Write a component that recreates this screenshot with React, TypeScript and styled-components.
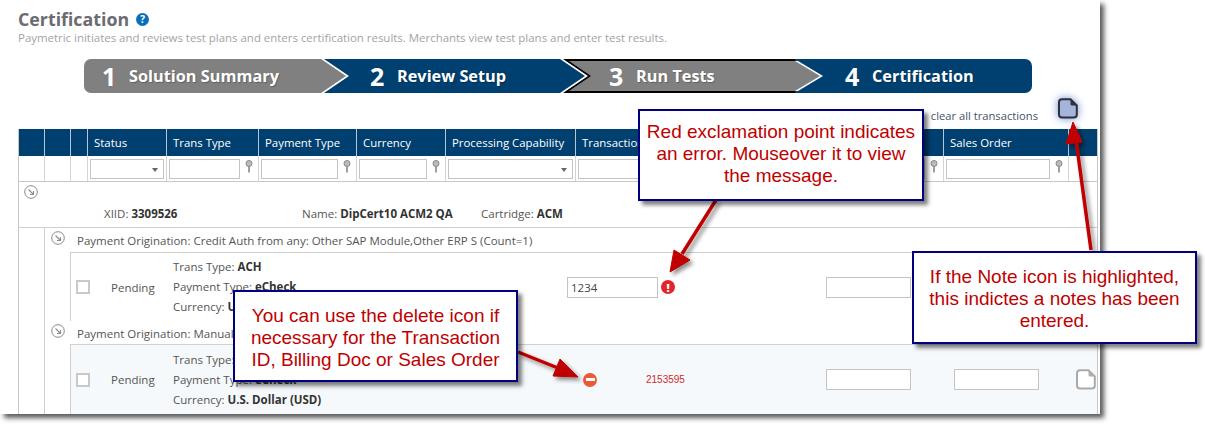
import React from "react";
import styled, { createGlobalStyle } from "styled-components";

const Global = createGlobalStyle`
  html, body { margin: 0; padding: 0; background: #fff; }
  body { font-family: "Open Sans", "Liberation Sans", sans-serif; }
  * { box-sizing: border-box; }
`;

const Page = styled.div`
  position: relative;
  width: 1205px;
  height: 429px;
  overflow: hidden;
  background: #fff;
`;

const Panel = styled.div`
  width: 1100px;
  height: 414px;
  padding: 9px 2px 0 18px;
  background: #fff;
  box-shadow: 4px 4px 5px rgba(0, 0, 0, 0.65);
  overflow: hidden;
`;

const TitleRow = styled.div`
  display: flex;
  align-items: center;
  gap: 7px;
  height: 20px;
`;

const Title = styled.h1`
  margin: 0;
  font-size: 17.8px;
  line-height: 20px;
  font-weight: 700;
  color: #6b6b70;
`;

const Help = styled.span`
  display: flex;
  align-items: center;
  justify-content: center;
  width: 13px;
  height: 13px;
  border-radius: 50%;
  background: #0b6fb8;
  color: #fff;
  font-size: 10px;
  font-weight: 700;
`;

const Subtitle = styled.p`
  margin: 0;
  height: 30px;
  font-size: 11.45px;
  line-height: 17px;
  color: #a3a3a6;
  white-space: nowrap;
`;

const Wizard = styled.div`
  display: flex;
  margin-left: 66px;
  width: 948px;
  height: 34px;
`;

const Step = styled.div<{ $color: string; $pad: number; $w: number; $z: number; $black?: boolean; $first?: boolean; $last?: boolean }>`
  position: relative;
  z-index: ${(p) => p.$z};
  display: flex;
  align-items: center;
  flex: 0 0 ${(p) => p.$w}px;
  padding-left: ${(p) => p.$pad}px;
  background: ${(p) => p.$color};
  color: #fff;
  border-top: ${(p) => (p.$black ? "2px solid #000" : "none")};
  border-bottom: ${(p) => (p.$black ? "2px solid #000" : "none")};
  border-radius: ${(p) => (p.$first ? "7px 0 0 7px" : p.$last ? "0 7px 7px 0" : "0")};
`;

const Tip = styled.span<{ $color: string; $shift: number }>`
  position: absolute;
  left: 100%;
  top: 0;
  bottom: 0;
  width: ${(p) => 25 + p.$shift}px;
  background: ${(p) => p.$color};
  clip-path: polygon(0 0, ${(p) => p.$shift}px 0, 100% 50%, ${(p) => p.$shift}px 100%, 0 100%);
`;

const StepNum = styled.span`
  width: 27px;
  font-size: 25px;
  font-weight: 700;
  font-family: "Open Sans", sans-serif;
  line-height: 30px;
`;

const StepLabel = styled.span`
  font-size: 16.3px;
  font-weight: 700;
  white-space: nowrap;
  text-shadow: 1px 1px 1px rgba(0, 0, 0, 0.25);
`;

const Toolbar = styled.div`
  display: flex;
  justify-content: flex-end;
  align-items: flex-end;
  height: 36px;
  padding-right: 20px;
  gap: 20px;
`;

const ClearLink = styled.span`
  font-size: 11.2px;
  line-height: 14px;
  padding-bottom: 6px;
  color: #44546a;
`;

const NoteIcon = styled.svg<{ $lit?: boolean }>`
  display: block;
  width: 20px;
  height: 21px;
  margin-bottom: ${(p) => (p.$lit ? 10 : 0)}px;
  filter: ${(p) => (p.$lit ? "drop-shadow(0 0 4px rgba(90,125,205,.9))" : "none")};
`;

const Table = styled.div`
  width: 1080px;
  height: 285px;
  border-left: 1px solid #c8c8c8;
  border-right: 1px solid #c8c8c8;
`;

const GridRow = styled.div`
  display: grid;
  grid-template-columns: 26px 26px 17px 79px 92px 98px 89px 130px 240px 128px 125px 1fr;
`;

const HeadRow = styled(GridRow)`
  height: 27px;
  background: #004070;
`;

const HeadCell = styled.div`
  display: flex;
  align-items: center;
  padding-left: 6px;
  border-right: 1px solid #b9c6d2;
  color: #fff;
  font-size: 11.4px;
  white-space: nowrap;
  overflow: hidden;
  &:last-child { border-right: none; }
`;

const FilterRow = styled(GridRow)`
  height: 26px;
  border-bottom: 1px solid #c8c8c8;
`;

const FilterCell = styled.div`
  display: flex;
  align-items: center;
  gap: 5px;
  padding: 0 2px;
  border-right: 1px solid #d4d4d4;
  &:last-child { border-right: none; }
`;

const FilterInput = styled.div`
  position: relative;
  flex: 1;
  min-width: 0;
  height: 20px;
  border: 1px solid #c4c4c4;
  background: #fff;
`;

const Caret = styled.span`
  position: absolute;
  right: 5px;
  top: 8px;
  border-left: 3px solid transparent;
  border-right: 3px solid transparent;
  border-top: 4px solid #666;
`;

const PinIcon = styled.svg`
  flex: none;
  width: 8px;
  height: 13px;
  margin-right: 3px;
  margin-top: -4px;
`;

const ExpandIcon = styled.svg`
  display: block;
  flex: none;
  width: 14px;
  height: 14px;
`;

const Group = styled.div`
  height: 46px;
  padding: 3px 0 0 5px;
  border-bottom: 1px solid #d0d0d0;
`;

const GroupInfo = styled.div`
  display: grid;
  grid-template-columns: 198px 179px auto;
  margin: 7px 0 0 80px;
  font-size: 11.5px;
  line-height: 16px;
  color: #555;
`;

const Strong = styled.b`
  color: #333;
  font-weight: 700;
`;

const Sub = styled.div`
  margin-left: 25px;
  border-left: 1px solid #d0d0d0;
`;

const SubLabel = styled.div<{ $h: number }>`
  display: flex;
  align-items: flex-start;
  gap: 12px;
  height: ${(p) => p.$h}px;
  padding: 3px 0 0 6px;
  font-size: 11.5px;
  line-height: 19px;
  color: #555;
  background: #fff;
  white-space: nowrap;
`;

const Row = styled.div<{ $alt?: boolean }>`
  display: grid;
  grid-template-columns: 40px 62px 394px 259px 128px 122px 1fr;
  align-items: center;
  margin-left: 25px;
  height: ${(p) => (p.$alt ? 70 : 69)}px;
  border-top: 1px solid #d0d0d0;
  border-left: 1px solid #d0d0d0;
  background: ${(p) => (p.$alt ? "#f6f9fb" : "#fff")};
`;

const Check = styled.span`
  display: block;
  width: 14px;
  height: 14px;
  margin-left: 5px;
  border: 2px solid #c9c9c9;
  background: #fff;
`;

const Status = styled.span`
  font-size: 11.5px;
  color: #555;
`;

const Details = styled.div`
  font-size: 11.5px;
  line-height: 20px;
  color: #555;
  white-space: nowrap;
`;

const TxCell = styled.div`
  display: flex;
  align-items: center;
`;

const TxInput = styled.div`
  width: 91px;
  height: 21px;
  padding-left: 3px;
  border: 1px solid #c4c4c4;
  background: #fff;
  font-size: 11.5px;
  line-height: 19px;
  color: #444;
`;

const PlainInput = styled(TxInput)`
  width: 85px;
`;

const ErrorDot = styled.span`
  display: flex;
  align-items: center;
  justify-content: center;
  width: 14px;
  height: 14px;
  margin-left: 3px;
  border-radius: 50%;
  background: #e0262b;
  color: #fff;
  font-size: 11px;
  font-weight: 800;
`;

const DeleteDot = styled.span`
  display: flex;
  align-items: center;
  justify-content: center;
  width: 14px;
  height: 14px;
  margin: 0 49px 0 16px;
  border-radius: 50%;
  background: #ec5a35;
  &::after {
    content: "";
    width: 9px;
    height: 3px;
    background: #fff;
  }
`;

const TxId = styled.span`
  font-family: "Liberation Sans", Arial, sans-serif;
  font-size: 10px;
  color: #cf2a2a;
`;

const Callout = styled.div<{ $x: number; $y: number; $w: number; $h: number; $nudge: number }>`
  position: absolute;
  left: ${(p) => p.$x}px;
  top: ${(p) => p.$y}px;
  width: ${(p) => p.$w}px;
  height: ${(p) => p.$h}px;
  display: flex;
  align-items: center;
  justify-content: center;
  padding-top: ${(p) => Math.max(p.$nudge * 2, 0)}px;
  padding-bottom: ${(p) => Math.max(-p.$nudge * 2, 0)}px;
  background: #fff;
  border: 2px solid #00007f;
  box-shadow: 4px 4px 4px rgba(0, 0, 0, 0.5);
  color: #c00000;
  font-family: "Liberation Sans", Arial, sans-serif;
  font-size: 19px;
  line-height: 22px;
  text-align: center;
  white-space: nowrap;
`;

const Arrows = styled.svg`
  position: absolute;
  left: 0;
  top: 0;
  width: 1205px;
  height: 429px;
  pointer-events: none;
`;

const Pin = () => (
  <PinIcon viewBox="0 0 8 13">
    <circle cx="4" cy="3.5" r="3" fill="#bbb" stroke="#888" />
    <path d="M4 6.5V12.5" stroke="#888" strokeWidth="1.6" />
  </PinIcon>
);

const Expand = () => (
  <ExpandIcon viewBox="0 0 14 14" fill="none" stroke="#8a8a8a">
    <circle cx="7" cy="7" r="6.3" />
    <path d="M4.5 4.5L9.5 9.5M9.5 6V9.5H6" strokeWidth="1.1" />
  </ExpandIcon>
);

const Note = ({ lit }: { lit?: boolean }) => (
  <NoteIcon $lit={lit} viewBox="0 0 20 21">
    <path
      d="M4 1.2H12.5L18.8 7.5V16.5A3 3 0 0 1 15.8 19.5H4A3 3 0 0 1 1 16.5V4.2A3 3 0 0 1 4 1.2Z"
      fill={lit ? "#a3b5d8" : "#fff"}
      stroke={lit ? "#2f3138" : "#aaa"}
      strokeWidth="2"
    />
    <path d="M12.5 1.2V6A1.5 1.5 0 0 0 14 7.5H18.8Z" fill={lit ? "#2f3138" : "#b0b0b0"} />
  </NoteIcon>
);

const headers = ["", "", "", "Status", "Trans Type", "Payment Type", "Currency", "Processing Capability", "Transaction ID", "Billing Doc", "Sales Order", ""];
const filters = ["", "", "", "select", "pin", "pin", "pin", "select", "pin", "pin", "pin", ""];

const BLUE = "#004070";
const GRAY = "#808080";

const RowDetails = () => (
  <Details>
    <div>Trans Type: <Strong>ACH</Strong></div>
    <div>Payment Type: <Strong>eCheck</Strong></div>
    <div>Currency: <Strong>U.S. Dollar (USD)</Strong></div>
  </Details>
);

export default function App() {
  return (
    <Page>
      <Global />
      <Panel>
        <TitleRow>
          <Title>Certification</Title>
          <Help>?</Help>
        </TitleRow>
        <Subtitle>Paymetric initiates and reviews test plans and enters certification results. Merchants view test plans and enter test results.</Subtitle>
        <Wizard>
          <Step $color={GRAY} $w={237} $pad={18} $z={4} $first>
            <Tip $color="#fff" $shift={3} />
            <Tip $color={GRAY} $shift={0} />
            <StepNum>1</StepNum>
            <StepLabel>Solution Summary</StepLabel>
          </Step>
          <Step $color={BLUE} $w={239} $pad={49} $z={3}>
            <Tip $color="#000" $shift={6} />
            <Tip $color="#fff" $shift={3} />
            <Tip $color={BLUE} $shift={0} />
            <StepNum>2</StepNum>
            <StepLabel>Review Setup</StepLabel>
          </Step>
          <Step $color={GRAY} $w={235} $pad={49} $z={2} $black>
            <Tip $color="#fff" $shift={3} />
            <Tip $color={GRAY} $shift={0} />
            <StepNum>3</StepNum>
            <StepLabel>Run Tests</StepLabel>
          </Step>
          <Step $color={BLUE} $w={237} $pad={50} $z={1} $last>
            <StepNum>4</StepNum>
            <StepLabel>Certification</StepLabel>
          </Step>
        </Wizard>
        <Toolbar>
          <ClearLink>clear all transactions</ClearLink>
          <Note lit />
        </Toolbar>
        <Table>
          <HeadRow>
            {headers.map((h, i) => (
              <HeadCell key={i}>{h}</HeadCell>
            ))}
          </HeadRow>
          <FilterRow>
            {filters.map((f, i) => (
              <FilterCell key={i}>
                {f && <FilterInput>{f === "select" && <Caret />}</FilterInput>}
                {f === "pin" && <Pin />}
              </FilterCell>
            ))}
          </FilterRow>
          <Group>
            <Expand />
            <GroupInfo>
              <span>XIID: <Strong>3309526</Strong></span>
              <span>Name: <Strong>DipCert10 ACM2 QA</Strong></span>
              <span>Cartridge: <Strong>ACM</Strong></span>
            </GroupInfo>
          </Group>
          <Sub>
            <SubLabel $h={24}>
              <Expand />
              Payment Origination: Credit Auth from any: Other SAP Module,Other ERP S (Count=1)
            </SubLabel>
            <Row>
              <Check />
              <Status>Pending</Status>
              <RowDetails />
              <TxCell>
                <TxInput>1234</TxInput>
                <ErrorDot>!</ErrorDot>
              </TxCell>
              <PlainInput />
              <PlainInput />
              <span />
            </Row>
            <SubLabel $h={23}>
              <Expand />
              Payment Origination: Manual
            </SubLabel>
            <Row $alt>
              <Check />
              <Status>Pending</Status>
              <RowDetails />
              <TxCell>
                <DeleteDot />
                <TxId>2153595</TxId>
              </TxCell>
              <PlainInput />
              <PlainInput />
              <Note />
            </Row>
          </Sub>
        </Table>
      </Panel>
      <Arrows viewBox="0 0 1205 429">
        <defs>
          <filter id="arrowShadow" x="-30%" y="-30%" width="160%" height="160%">
            <feDropShadow dx="3" dy="3" stdDeviation="2" floodColor="#000" floodOpacity="0.45" />
          </filter>
        </defs>
        <g filter="url(#arrowShadow)" fill="#c00000" stroke="#c00000">
          <path d="M716 200L682 254" strokeWidth="3.5" />
          <path d="M670 272L674 250L690 260Z" />
          <path d="M1091 250L1076 140" strokeWidth="3.5" />
          <path d="M1073 122L1082 142L1066 144Z" />
          <path d="M518 352L558 368" strokeWidth="3.5" />
          <path d="M578 377L553 376L560 359Z" />
        </g>
      </Arrows>
      <Callout $x={638} $y={109} $w={286} $h={92} $nudge={-1}>
        <span>Red exclamation point indicates<br />an error. Mouseover it to view<br />the message.</span>
      </Callout>
      <Callout $x={233} $y={290} $w={285} $h={92} $nudge={2}>
        <span>You can use the delete icon if<br />necessary for the Transaction<br />ID, Billing Doc or Sales Order</span>
      </Callout>
      <Callout $x={912} $y={251} $w={285} $h={93} $nudge={1}>
        <span>If the Note icon is highlighted,<br />this indictes a notes has been<br />entered.</span>
      </Callout>
    </Page>
  );
}
